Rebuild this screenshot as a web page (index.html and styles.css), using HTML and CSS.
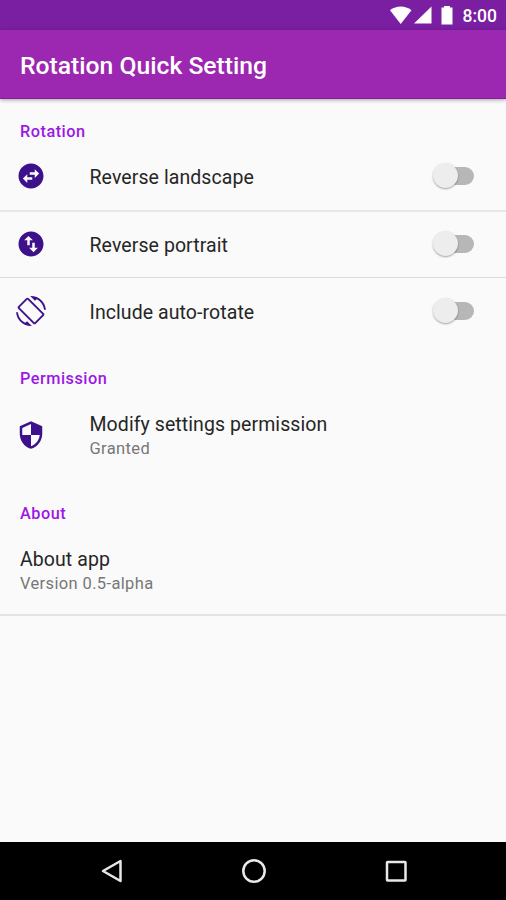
FILE: index.html
```html
<!DOCTYPE html>
<html lang="en">
<head>
<meta charset="utf-8">
<title>Rotation Quick Setting</title>
<link rel="stylesheet" href="styles.css">
</head>
<body>
<div class="status">
  <svg class="status-icons" width="68" height="30" viewBox="0 0 68 30" fill="#fff">
    <path d="M1 10.2C7.500 5.200 16 5.200 22.500 10.200L11.700 24Z"/>
    <path d="M42.500 6.500V23.500H25Z"/>
    <path d="M52.500 7.500H55V6H61V7.500H63.500V24.500H52.500Z"/>
  </svg>
  <span class="clock">8:00</span>
</div>
<header class="toolbar"><h1>Rotation Quick Setting</h1></header>
<main>
  <h2 class="first">Rotation</h2>
  <div class="row toggle landscape">
    <svg class="icon" viewBox="0 0 24 24"><path d="M22 12c0-5.520-4.480-10-10-10S2 6.480 2 12s4.480 10 10 10 10-4.480 10-10zm-7-5.500l3.500 3.500-3.500 3.500V11h-4V9h4V6.500zm-6 11L5.500 14 9 10.500V13h4v2H9v2.500z"/></svg>
    <span class="title">Reverse landscape</span>
    <span class="switch"></span>
  </div>
  <div class="row toggle portrait">
    <svg class="icon" viewBox="0 0 24 24"><path d="M12 2C6.480 2 2 6.480 2 12s4.480 10 10 10 10-4.480 10-10S17.520 2 12 2zM6.500 9L10 5.500 13.500 9H11v4H9V9H6.500zm11 6L14 18.500 10.500 15H13v-4h2v4h2.500z"/></svg>
    <span class="title">Reverse portrait</span>
    <span class="switch"></span>
  </div>
  <div class="row toggle">
    <svg class="icon" viewBox="0 0 24 24"><path d="M16.480 2.520c3.270 1.550 5.610 4.720 5.970 8.480h1.500C23.440 4.840 18.290 0 12 0l-.66.03 3.810 3.810 1.330-1.320zm-6.250-.77c-.59-.59-1.540-.59-2.120 0L1.750 8.110c-.59.59-.59 1.540 0 2.120l12.020 12.020c.59.59 1.540.59 2.120 0l6.360-6.360c.59-.59.59-1.540 0-2.120L10.230 1.750zm4.600 19.440L2.810 9.170l6.360-6.360 12.020 12.020-6.360 6.360zm-7.310.29C4.250 19.940 1.910 16.760 1.550 13H.05C.56 19.160 5.710 24 12 24l.66-.03-3.810-3.810-1.330 1.320z"/></svg>
    <span class="title">Include auto-rotate</span>
    <span class="switch"></span>
  </div>
  <h2>Permission</h2>
  <div class="row permission">
    <svg class="icon" viewBox="0 0 24 24"><path d="M12 1L3 5v6c0 5.550 3.840 10.740 9 12 5.160-1.260 9-6.450 9-12V5l-9-4zm0 10.990h7c-.53 4.120-3.280 7.790-7 8.940V12H5V6.300l7-3.110v8.800z"/></svg>
    <div class="text"><span class="title">Modify settings permission</span><span class="summary">Granted</span></div>
  </div>
  <h2>About</h2>
  <div class="row about">
    <div class="text"><span class="title">About app</span><span class="summary">Version 0.5-alpha</span></div>
  </div>
</main>
<nav class="navbar">
  <svg width="24" height="26" viewBox="0 0 24 26"><path d="M20.500 3V23L3 13Z"/></svg>
  <svg width="26" height="26" viewBox="0 0 26 26"><circle cx="13" cy="13" r="10.700"/></svg>
  <svg width="24" height="26" viewBox="0 0 24 26"><rect x="3" y="4" width="18.500" height="18.500" rx=".5"/></svg>
</nav>
</body>
</html>
```
FILE: styles.css
```css
* { box-sizing: border-box; }
body {
  margin: 0;
  height: 900px;
  display: flex;
  flex-direction: column;
  overflow: hidden;
  background: #fafafa;
  font-family: Roboto, sans-serif;
}
.status {
  height: 30px;
  flex: none;
  display: flex;
  align-items: center;
  justify-content: flex-end;
  gap: 6px;
  padding-right: 9px;
  background: #7b1fa2;
  color: #fff;
}
.clock { font-size: 17.500px; font-weight: 500; line-height: 30px; padding-top: 2px; }
.toolbar {
  height: 69px;
  flex: none;
  display: flex;
  align-items: center;
  padding: 4px 20px 0;
  background: #9c27b0;
  border-bottom: 1px solid #8b1b9f;
  box-shadow: 0 1px 4px rgba(0, 0, 0, .35);
  color: #fff;
}
h1 { margin: 0; font-size: 24.700px; font-weight: 500; line-height: 32px; }
main { flex: 1; }
h2 {
  margin: 0;
  height: 56px;
  padding: 24px 20px 0;
  font-size: 16.300px;
  line-height: 20px;
  font-weight: 500;
  letter-spacing: .5px;
  color: #9d17e6;
}
h2.first { height: 44px; padding-top: 23px; }
.row { display: flex; align-items: center; padding: 0 32px 0 15.500px; }
.toggle { height: 67px; padding-bottom: 2px; }
.landscape { height: 69px; border-bottom: 2px solid #e8e8e8; }
.portrait { height: 66px; border-bottom: 1px solid #dcdcdc; }
.icon { width: 30px; height: 30px; flex: none; margin-right: 44px; fill: #3d108c; }
.title { font-size: 19.500px; line-height: 27px; letter-spacing: .08px; color: #262626; }
.toggle .title { flex: 1; padding-top: 3px; }
.text { display: flex; flex-direction: column; }
.summary { font-size: 16.500px; line-height: 22px; letter-spacing: .36px; color: #777; }
.permission { height: 68px; margin-bottom: 11px; }
.about { height: 80px; padding: 0 20px 10px; border-bottom: 2px solid #e3e3e3; }
.switch {
  position: relative;
  width: 40px;
  height: 18px;
  border-radius: 9px;
  background: linear-gradient(#b7b7b7, #b7b7b7) right / 26px 18px no-repeat;
}
.switch::before {
  content: "";
  position: absolute;
  left: -1px;
  top: -4px;
  width: 25px;
  height: 25px;
  border-radius: 50%;
  background: #ededed;
  box-shadow: 0 1px 2px rgba(0, 0, 0, .35);
}
.navbar {
  height: 58px;
  flex: none;
  display: flex;
  align-items: center;
  justify-content: space-between;
  padding: 0 98px 0 100px;
  background: #000;
}
.navbar svg { fill: none; stroke: #e8e8e8; stroke-width: 2.500; stroke-linejoin: round; }
```
